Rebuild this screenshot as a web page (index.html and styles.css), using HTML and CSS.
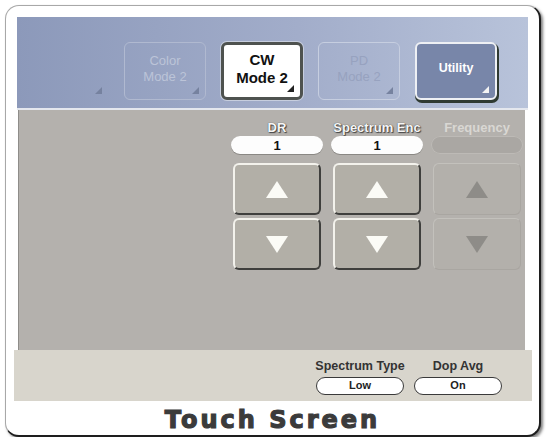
FILE: index.html
```html
<!DOCTYPE html>
<html lang="en">
<head>
    <meta charset="UTF-8">
    <title>Touch Screen</title>
    <link rel="stylesheet" href="styles.css">
</head>
<body>
    <div class="frame">
        <div class="modes">
            <div class="mode ghost blank"><span class="corner"></span></div>
            <div class="mode ghost">Color<br>Mode 2<span class="corner"></span></div>
            <div class="mode active">CW<br>Mode 2<span class="corner"></span></div>
            <div class="mode ghost dim">PD<br>Mode 2<span class="corner"></span></div>
            <div class="mode utility">Utility<span class="corner"></span></div>
        </div>
        <div class="controls">
            <div class="control">
                <div class="label">DR</div>
                <div class="value">1</div>
                <div class="step first"><span class="tri up"></span></div>
                <div class="step"><span class="tri down"></span></div>
            </div>
            <div class="control">
                <div class="label">Spectrum Enc</div>
                <div class="value">1</div>
                <div class="step first"><span class="tri up"></span></div>
                <div class="step"><span class="tri down"></span></div>
            </div>
            <div class="control off">
                <div class="label">Frequency</div>
                <div class="value"></div>
                <div class="step first"><span class="tri up"></span></div>
                <div class="step"><span class="tri down"></span></div>
            </div>
        </div>
        <div class="options">
            <div class="option">
                <div class="opt-label">Spectrum Type</div>
                <div class="opt-value">Low</div>
            </div>
            <div class="option">
                <div class="opt-label">Dop Avg</div>
                <div class="opt-value">On</div>
            </div>
        </div>
        <div class="title">Touch Screen</div>
    </div>
</body>
</html>
```
FILE: styles.css
```css
body { margin: 0; background: #fff; font-family: "Liberation Sans", Arial, sans-serif; }

.frame {
    margin: 5px 0 0 5px;
    width: 536px;
    height: 432px;
    box-sizing: border-box;
    border: 1px solid #a8a8a8;
    border-right: 2px solid #1e1e1e;
    border-bottom: 2px solid #1e1e1e;
    border-radius: 14px;
    box-shadow: 2px 2px 3px rgba(0, 0, 0, 0.5);
    background: #fff;
    padding: 11px 11px 0 11px;
    display: flex;
    flex-direction: column;
}

/* mode buttons along the top */
.modes {
    height: 93px;
    box-sizing: border-box;
    background: linear-gradient(to right, #8c99ba 0%, #a2adca 55%, #b8c3da 100%);
    border-bottom: 2px solid #e4e7ee;
    display: flex;
    justify-content: flex-end;
    align-items: flex-end;
    gap: 15px;
    padding: 0 31px 8px 0;
}
.mode {
    position: relative;
    width: 82px;
    height: 58px;
    box-sizing: border-box;
    border-radius: 6px;
    display: flex;
    align-items: center;
    justify-content: center;
    text-align: center;
    font-weight: bold;
    font-size: 15px;
    line-height: 18px;
    padding-bottom: 4px;
}
.corner {
    position: absolute;
    right: 6px;
    bottom: 5px;
    width: 0;
    height: 0;
    border-left: 7px solid transparent;
    border-bottom: 7px solid #222;
}
.ghost {
    border: 1px solid #b0b9d0;
    color: #bcc4d8;
    font-weight: normal;
    font-size: 13px;
    line-height: 16px;
}
.ghost .corner { border-bottom-color: #76829f; }
.ghost.blank { border-color: transparent; }
.ghost.dim { color: #97a2bf; border-color: #c6cee0; }
.active {
    background: #fff;
    color: #111;
    border: 3px solid #4e524f;
    box-shadow: 0 0 0 1px #c7cede;
}
.utility {
    background: #7886a9;
    color: #fff;
    font-size: 12.5px;
    border: 2px solid #eef0f4;
    box-shadow: 1px 2px 0 1px #2f3a32;
    padding-bottom: 6px;
}
.utility .corner { border-bottom-color: #f4f4f4; }

/* grey panel with steppers */
.controls {
    height: 240px;
    box-sizing: border-box;
    margin: 0 3px 0 1px;
    background: #b4b1ad;
    border-left: 1px solid #8f8d8a;
    display: flex;
    justify-content: flex-end;
    gap: 12px;
    padding: 10px 4px 0 0;
}
.control { width: 88px; display: flex; flex-direction: column; align-items: center; }
.label {
    font-size: 13px;
    font-weight: bold;
    color: #f6f6f6;
    text-shadow: 0 0 1px #333, 1px 1px 1px #444;
    height: 15px;
    line-height: 15px;
    white-space: nowrap;
}
.value {
    width: 92px;
    height: 18px;
    margin-top: 1px;
    border-radius: 9px;
    background: #fdfdfd;
    box-shadow: 0 1px 0 #8a8884;
    text-align: center;
    font-weight: bold;
    font-size: 13px;
    line-height: 19px;
    color: #111;
}
.step {
    width: 88px;
    height: 52px;
    box-sizing: border-box;
    margin-top: 3px;
    border: 2px solid;
    border-color: #f3f2ec #3f3f3d #3f3f3d #f3f2ec;
    border-radius: 6px;
    background: #b2afa7;
    display: flex;
    align-items: center;
    justify-content: center;
}
.step.first { margin-top: 9px; }
.tri { width: 0; height: 0; border-left: 11px solid transparent; border-right: 11px solid transparent; }
.tri.up { border-bottom: 17px solid #fbfbf6; }
.tri.down { border-top: 17px solid #fbfbf6; }

.off .label { color: #d9d7d3; text-shadow: none; }
.off .value { background: #aaa7a3; box-shadow: inset 0 0 0 1px #bdbab6; }
.off .step { border-color: #c3c1bc #a9a6a1 #a9a6a1 #c3c1bc; border-width: 1px; background: #b3b0ab; }
.off .tri.up { border-bottom-color: #8e8c88; }
.off .tri.down { border-top-color: #8e8c88; }

/* beige option strip */
.options {
    height: 51px;
    box-sizing: border-box;
    margin: 0 -4px 0 -3px;
    background: #d8d5cc;
    display: flex;
    justify-content: flex-end;
    gap: 10px;
    padding: 8px 30px 0 0;
}
.option { width: 88px; display: flex; flex-direction: column; align-items: center; }
.opt-label { font-size: 12.5px; font-weight: bold; color: #333; height: 17px; line-height: 17px; white-space: nowrap; }
.opt-value {
    width: 88px;
    height: 18px;
    box-sizing: border-box;
    margin-top: 2px;
    border: 1.5px solid #3a3a3a;
    border-radius: 9px;
    background: #fff;
    text-align: center;
    font-weight: bold;
    font-size: 11px;
    line-height: 15px;
    color: #222;
}

.title {
    flex: 1;
    display: flex;
    align-items: center;
    justify-content: center;
    font-family: "DejaVu Sans", sans-serif;
    font-weight: bold;
    font-size: 24px;
    letter-spacing: 3px;
    color: #3b3b3b;
    -webkit-text-stroke: 1.2px #3b3b3b;
    padding-top: 4px;
}
```
